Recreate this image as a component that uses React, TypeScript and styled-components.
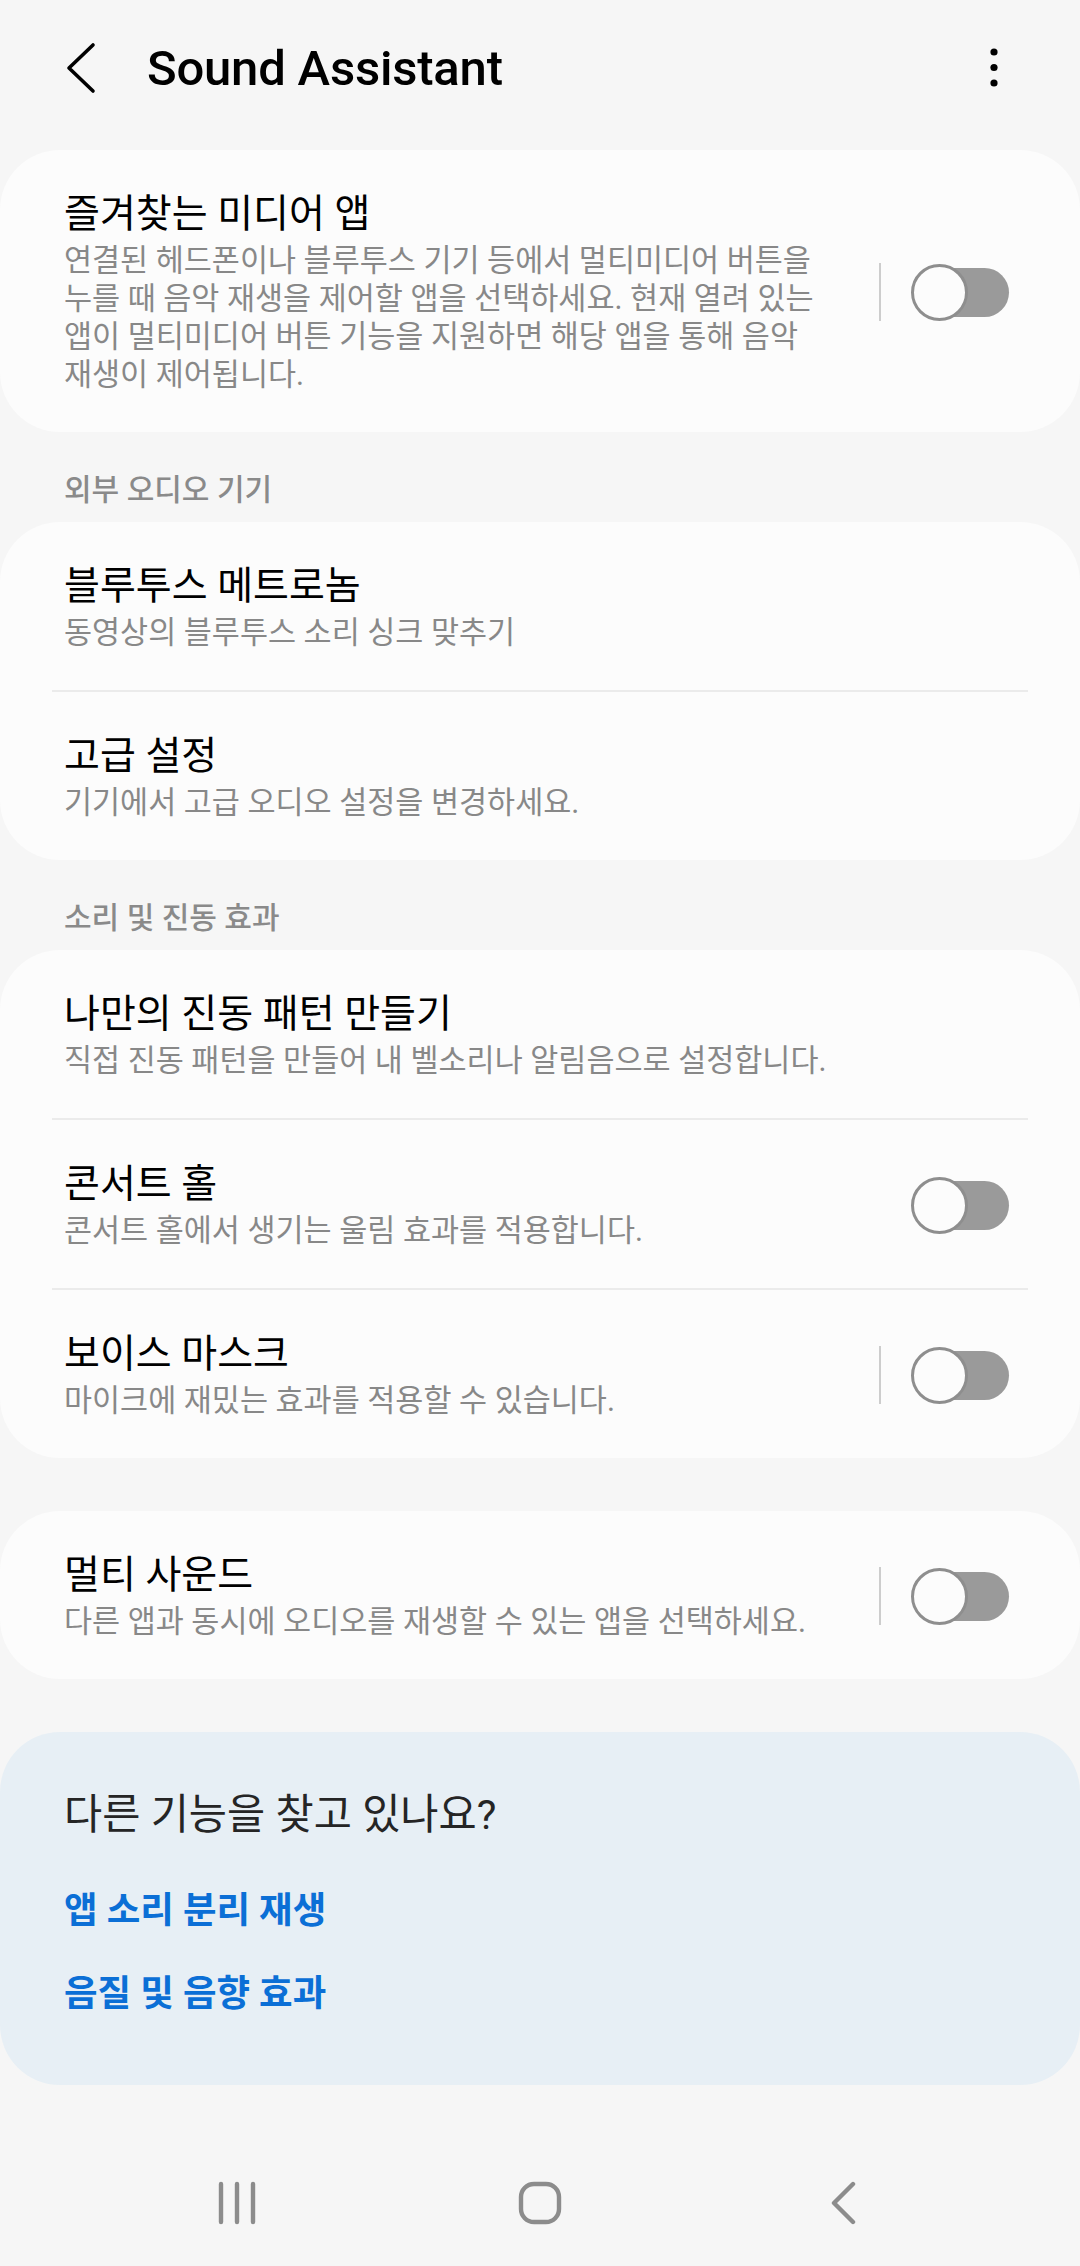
import React from "react";
import styled, { createGlobalStyle } from "styled-components";

type Item = {
  title: string;
  desc: string;
  toggle?: boolean;
  divider?: boolean;
};

const groups: { header?: string; gap?: boolean; items: Item[] }[] = [
  {
    items: [
      {
        title: "즐겨찾는 미디어 앱",
        desc: "연결된 헤드폰이나 블루투스 기기 등에서 멀티미디어 버튼을 누를 때 음악 재생을 제어할 앱을 선택하세요. 현재 열려 있는 앱이 멀티미디어 버튼 기능을 지원하면 해당 앱을 통해 음악 재생이 제어됩니다.",
        toggle: true,
        divider: true,
      },
    ],
  },
  {
    header: "외부 오디오 기기",
    items: [
      { title: "블루투스 메트로놈", desc: "동영상의 블루투스 소리 싱크 맞추기" },
      { title: "고급 설정", desc: "기기에서 고급 오디오 설정을 변경하세요." },
    ],
  },
  {
    header: "소리 및 진동 효과",
    items: [
      {
        title: "나만의 진동 패턴 만들기",
        desc: "직접 진동 패턴을 만들어 내 벨소리나 알림음으로 설정합니다.",
      },
      {
        title: "콘서트 홀",
        desc: "콘서트 홀에서 생기는 울림 효과를 적용합니다.",
        toggle: true,
      },
      {
        title: "보이스 마스크",
        desc: "마이크에 재밌는 효과를 적용할 수 있습니다.",
        toggle: true,
        divider: true,
      },
    ],
  },
  {
    gap: true,
    items: [
      {
        title: "멀티 사운드",
        desc: "다른 앱과 동시에 오디오를 재생할 수 있는 앱을 선택하세요.",
        toggle: true,
        divider: true,
      },
    ],
  },
];

const App = () => {
  return (
    <>
      <GlobalStyle />
      <Page>
        <Header>
          <BackButton>
            <svg width="32" height="52" viewBox="0 0 32 52">
              <path
                d="M28 3 L4 26 L28 49"
                fill="none"
                stroke="#000"
                strokeWidth="3.6"
                strokeLinecap="round"
                strokeLinejoin="round"
              />
            </svg>
          </BackButton>
          <Title>Sound Assistant</Title>
          <MoreButton>
            <svg width="12" height="44" viewBox="0 0 12 44">
              <circle cx="6" cy="6" r="3.6" fill="#000" />
              <circle cx="6" cy="21.5" r="3.6" fill="#000" />
              <circle cx="6" cy="37" r="3.6" fill="#000" />
            </svg>
          </MoreButton>
        </Header>

        {groups.map((group, gi) => (
          <React.Fragment key={gi}>
            {group.header && <SectionHeader>{group.header}</SectionHeader>}
            <Card $first={gi === 0} $gap={group.gap}>
              {group.items.map((item, i) => (
                <React.Fragment key={item.title}>
                  {i > 0 && <Separator />}
                  <Row>
                    <TextBlock>
                      <ItemTitle>{item.title}</ItemTitle>
                      <ItemDesc>{item.desc}</ItemDesc>
                    </TextBlock>
                    {item.toggle && (
                      <ToggleArea>
                        {item.divider && <VDivider />}
                        <Switch>
                          <Track />
                          <Thumb />
                        </Switch>
                      </ToggleArea>
                    )}
                  </Row>
                </React.Fragment>
              ))}
            </Card>
          </React.Fragment>
        ))}

        <SuggestCard>
          <SuggestTitle>다른 기능을 찾고 있나요?</SuggestTitle>
          <LinkList>
            <SuggestLink>앱 소리 분리 재생</SuggestLink>
            <SuggestLink>음질 및 음향 효과</SuggestLink>
          </LinkList>
        </SuggestCard>

        <NavBar>
          <NavSlot>
            <svg width="40" height="44" viewBox="0 0 40 44">
              <g stroke="#8c8c8c" strokeWidth="4.4" strokeLinecap="round">
                <line x1="4" y1="3" x2="4" y2="41" />
                <line x1="20" y1="3" x2="20" y2="41" />
                <line x1="36" y1="3" x2="36" y2="41" />
              </g>
            </svg>
          </NavSlot>
          <NavSlot>
            <svg width="44" height="44" viewBox="0 0 44 44">
              <rect
                x="3"
                y="3"
                width="38"
                height="38"
                rx="13"
                fill="none"
                stroke="#8c8c8c"
                strokeWidth="4.4"
              />
            </svg>
          </NavSlot>
          <NavSlot>
            <svg width="28" height="44" viewBox="0 0 28 44">
              <path
                d="M24 3 L5 22 L24 41"
                fill="none"
                stroke="#8c8c8c"
                strokeWidth="4.4"
                strokeLinecap="round"
                strokeLinejoin="round"
              />
            </svg>
          </NavSlot>
        </NavBar>
      </Page>
    </>
  );
};
export default App;

const GlobalStyle = createGlobalStyle`
  * {
    box-sizing: border-box;
  }
  html, body {
    margin: 0;
    padding: 0;
    background: #f6f6f6;
  }
  body {
    font-family: "Roboto", "Noto Sans CJK KR", sans-serif;
    -webkit-font-smoothing: antialiased;
    word-break: keep-all;
  }
`;

const Page = styled.div`
  min-height: 2266px;
  width: 1080px;
  display: flex;
  flex-direction: column;
  background: #f6f6f6;
`;

const Header = styled.header`
  height: 136px;
  display: flex;
  align-items: center;
  padding: 0 72px 0 65px;
`;

const BackButton = styled.div`
  width: 32px;
  height: 52px;
  display: flex;
  align-items: center;
  margin-right: 50px;
`;

const Title = styled.h1`
  flex: 1;
  margin: 0;
  font-family: "Roboto", sans-serif;
  font-size: 49px;
  font-weight: 500;
  color: #000;
  letter-spacing: -0.2px;
`;

const MoreButton = styled.div`
  width: 12px;
  height: 44px;
  display: flex;
  margin-right: 8px;
`;

const SectionHeader = styled.div`
  padding: 40px 64px 14px;
  font-size: 30px;
  line-height: 36px;
  font-weight: 500;
  color: #8a8a8a;
`;

const Card = styled.div<{ $first?: boolean; $gap?: boolean }>`
  margin-top: ${({ $first, $gap }) => ($first ? "14px" : $gap ? "53px" : "0")};
  background: #fcfcfc;
  border-radius: 60px;
  overflow: hidden;
`;

const Separator = styled.div`
  height: 2px;
  margin: 0 52px;
  background: #ebebeb;
`;

const Row = styled.div`
  display: flex;
  align-items: center;
  padding: 40px 71px 38px 64px;
`;

const TextBlock = styled.div`
  flex: 1;
  min-width: 0;
  display: flex;
  flex-direction: column;
  gap: 4px;
`;

const ItemTitle = styled.div`
  font-size: 39px;
  line-height: 48px;
  color: #000;
`;

const ItemDesc = styled.div`
  font-size: 30.5px;
  line-height: 38px;
  color: #888888;
  word-break: keep-all;
`;

const ToggleArea = styled.div`
  width: 130px;
  margin-left: 35px;
  display: flex;
  align-items: center;
  justify-content: flex-end;
  gap: 30px;
  flex-shrink: 0;
`;

const VDivider = styled.div`
  width: 2px;
  height: 58px;
  background: #cdcdcd;
`;

const Switch = styled.div`
  position: relative;
  width: 98px;
  height: 57px;
  display: flex;
  align-items: center;
`;

const Track = styled.div`
  margin-left: 8px;
  width: 90px;
  height: 49px;
  border-radius: 25px;
  background: #9a9a9a;
`;

const Thumb = styled.div`
  position: absolute;
  left: 0;
  top: 0;
  width: 57px;
  height: 57px;
  border-radius: 50%;
  border: 3px solid #8e8e8e;
  background: #fcfcfc;
`;

const SuggestCard = styled.div`
  margin-top: 53px;
  padding: 58px 64px 69px;
  background: #e7eff5;
  border-radius: 60px;
`;

const SuggestTitle = styled.div`
  font-size: 41.5px;
  line-height: 50px;
  color: #252525;
`;

const LinkList = styled.div`
  margin-top: 49px;
  display: flex;
  flex-direction: column;
  gap: 39px;
`;

const SuggestLink = styled.div`
  font-size: 36.5px;
  line-height: 44px;
  font-weight: 700;
  color: #0b6fd6;
`;

const NavBar = styled.nav`
  margin-top: auto;
  height: 126px;
  display: flex;
  align-items: center;
  justify-content: center;
`;

const NavSlot = styled.div`
  width: 303px;
  display: flex;
  justify-content: center;
  align-items: center;
`;
